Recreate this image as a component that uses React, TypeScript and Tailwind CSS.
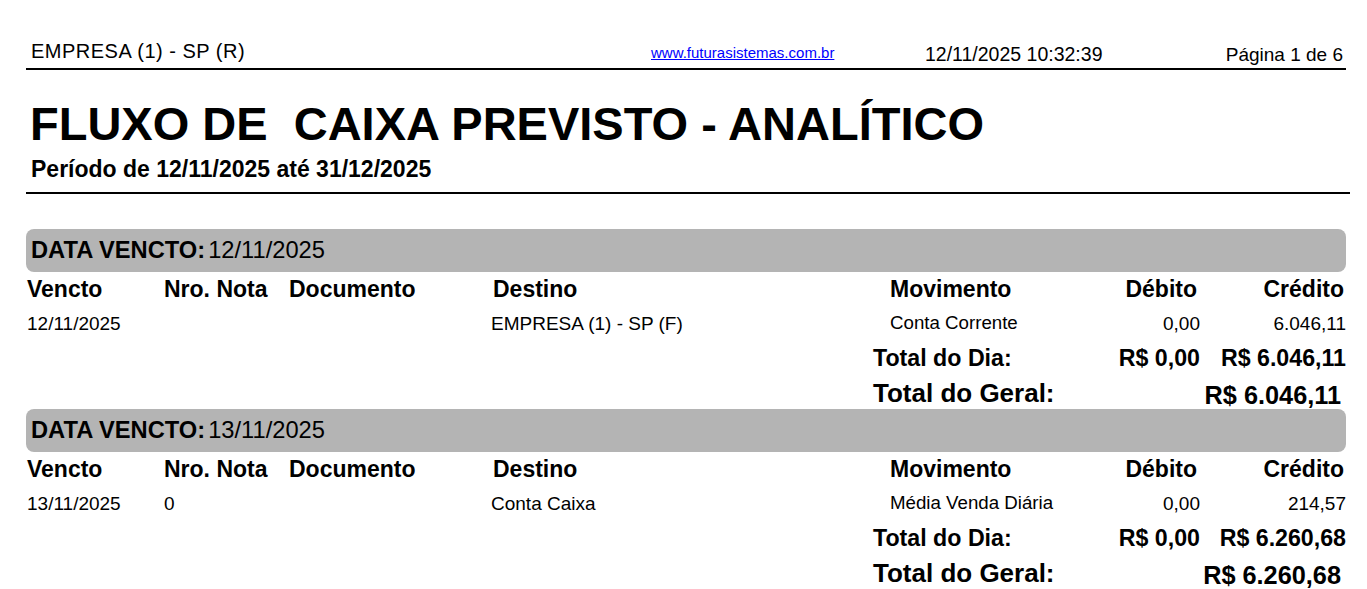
import React from "react"

interface Lancamento {
  vencto: string
  nota: string
  documento: string
  destino: string
  movimento: string
  debito: string
  credito: string
}

interface Grupo {
  data: string
  itens: Lancamento[]
  diaDebito: string
  diaCredito: string
  geral: string
}

const grupos: Grupo[] = [
  {
    data: "12/11/2025",
    itens: [
      {
        vencto: "12/11/2025",
        nota: "",
        documento: "",
        destino: "EMPRESA (1) - SP (F)",
        movimento: "Conta Corrente",
        debito: "0,00",
        credito: "6.046,11",
      },
    ],
    diaDebito: "R$ 0,00",
    diaCredito: "R$ 6.046,11",
    geral: "R$ 6.046,11",
  },
  {
    data: "13/11/2025",
    itens: [
      {
        vencto: "13/11/2025",
        nota: "0",
        documento: "",
        destino: "Conta Caixa",
        movimento: "Média Venda Diária",
        debito: "0,00",
        credito: "214,57",
      },
    ],
    diaDebito: "R$ 0,00",
    diaCredito: "R$ 6.260,68",
    geral: "R$ 6.260,68",
  },
]

const cols = "grid grid-cols-[137px_125px_204px_397px_200px_110px_146px] pl-[1px]"

function GrupoVencto({ grupo }: { grupo: Grupo }) {
  return (
    <div>
      {/* Faixa da data */}
      <div className="h-[43px] rounded-[8px] bg-[#b4b4b4] flex items-center pl-[5px] text-[23.7px] leading-none">
        <span className="font-bold">DATA VENCTO:</span>
        <span className="ml-[3px]">{grupo.data}</span>
      </div>

      {/* Cabeçalho das colunas */}
      <div className={`${cols} h-[34px] items-center text-[23px] font-bold leading-none`}>
        <div>Vencto</div>
        <div>Nro. Nota</div>
        <div>Documento</div>
        <div>Destino</div>
        <div>Movimento</div>
        <div className="text-right pr-[3px]">Débito</div>
        <div className="text-right pr-[2px]">Crédito</div>
      </div>

      {grupo.itens.map((item, i) => (
        <div key={i} className={`${cols} h-[34px] items-center text-[19px] leading-none`}>
          <div>{item.vencto}</div>
          <div>{item.nota}</div>
          <div>{item.documento}</div>
          <div className="-ml-[2px]">{item.destino}</div>
          <div className="text-[18.7px]">{item.movimento}</div>
          <div className="text-right">{item.debito}</div>
          <div className="text-right">{item.credito}</div>
        </div>
      ))}

      {/* Totais */}
      <div className="flex h-[37px] items-center pl-[847px] text-[23.2px] font-bold leading-none">
        <div className="w-[217px]">Total do Dia:</div>
        <div className="w-[110px] text-right">{grupo.diaDebito}</div>
        <div className="w-[146px] text-right">{grupo.diaCredito}</div>
      </div>
      <div className="flex h-[32px] items-center pl-[847px] font-bold leading-none">
        <div className="w-[327px] text-[26px]">Total do Geral:</div>
        <div className="w-[146px] text-right pr-[5px] text-[25.3px] mt-[6px]">{grupo.geral}</div>
      </div>
    </div>
  )
}

export default function App() {
  return (
    <div className="min-h-screen bg-white text-black font-['Liberation_Sans',Arial,sans-serif]">
      <div className="ml-[26px] w-[1320px]">
        {/* Cabeçalho da página */}
        <div className="h-[70px] flex items-end border-b-2 border-black leading-none">
          <div className="w-[625px] pl-[5px] mb-[7px] text-[20px] tracking-[0.5px]">EMPRESA (1) - SP (R)</div>
          <div className="w-[274px] mb-[8px] text-[15px]">
            <a href="#" className="text-[#0000ff] underline">
              www.futurasistemas.com.br
            </a>
          </div>
          <div className="mb-[4px] text-[19.5px]">12/11/2025 10:32:39</div>
          <div className="flex-1 text-right pr-[3px] mb-[4px] text-[19px]">Página 1 de 6</div>
        </div>

        {/* Título */}
        <div className="w-[1324px] border-b-2 border-black pb-[11px]">
          <h1 className="mt-[30px] pl-[4px] text-[47px] font-bold leading-none whitespace-pre">
            FLUXO DE  CAIXA PREVISTO - ANALÍTICO
          </h1>
          <p className="mt-[11px] pl-[5px] text-[23px] font-bold leading-none">
            Período de 12/11/2025 até 31/12/2025
          </p>
        </div>

        <div className="mt-[35px]">
          {grupos.map((g) => (
            <GrupoVencto key={g.data} grupo={g} />
          ))}
        </div>
      </div>
    </div>
  )
}
